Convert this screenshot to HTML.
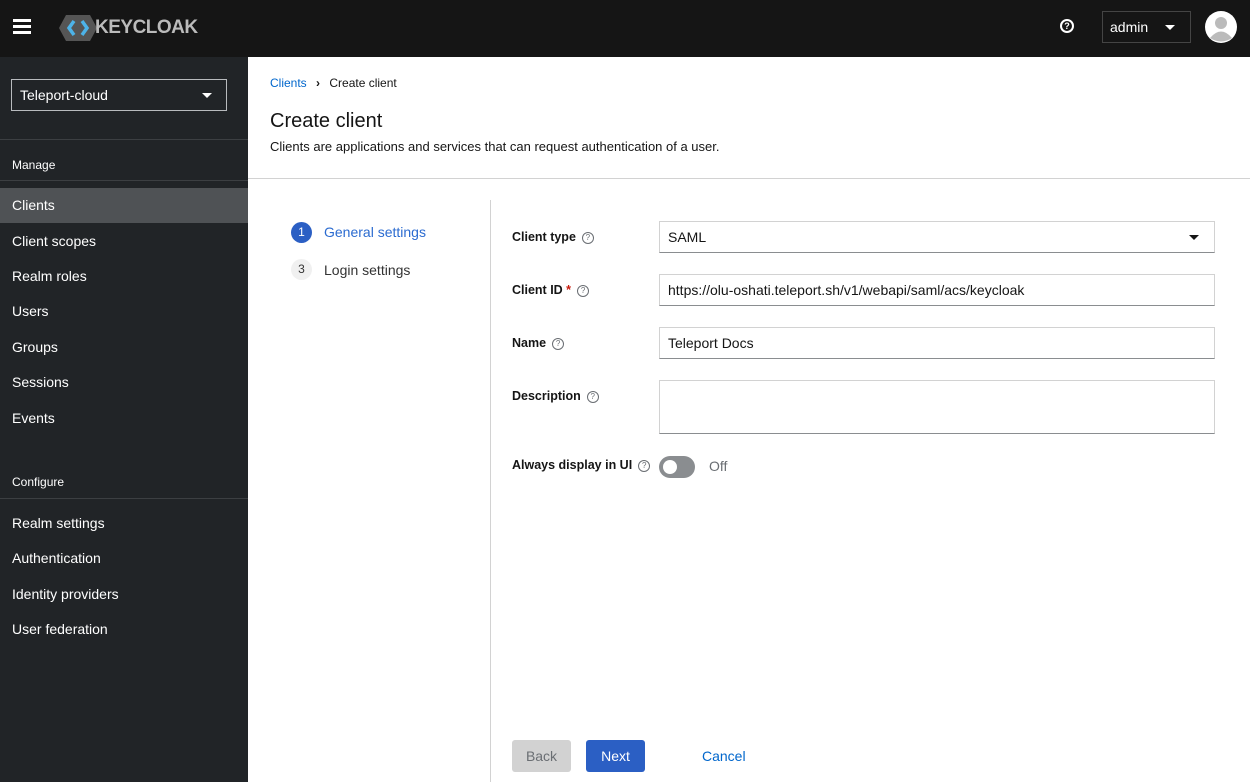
<!DOCTYPE html>
<html><head><meta charset="utf-8"><style>
*{box-sizing:border-box;margin:0;padding:0}
body{width:1250px;height:782px;overflow:hidden;font-family:"Liberation Sans",sans-serif;font-size:14px;color:#151515;background:#fff;position:relative}
.hdr{position:absolute;left:0;top:0;width:1250px;height:57px;background:#151515}
.side{position:absolute;left:0;top:57px;width:248px;height:725px;background:#212427;color:#fff}
.a{position:absolute}
.nav{position:absolute;left:0;width:248px;height:35px;line-height:35px;padding-left:12px;font-size:14px;color:#fff}
.q{display:inline-block;width:12px;height:12px;border:1px solid #6a6e73;border-radius:50%;font-size:8px;line-height:10px;text-align:center;color:#6a6e73;vertical-align:middle;margin-left:6px;font-weight:normal}
.lbl{position:absolute;left:512px;font-size:12.5px;font-weight:bold}
.inp{position:absolute;left:659px;width:556px;height:32px;border:1px solid #d2d2d2;border-bottom-color:#8a8d90;padding-left:8px;line-height:30px;font-size:14px}
</style></head><body>
<div class="hdr">
 <div class="a" style="left:13px;top:19px;width:18px;height:3px;background:#fff;box-shadow:0 6px 0 #fff,0 12px 0 #fff"></div>
 <svg class="a" style="left:59px;top:15px" width="38" height="26" viewBox="0 0 38 26"><polygon points="7,0 31,0 38,13 31,26 7,26 0,13" fill="#555"/><path d="M15 6 L10 13 L15 20" stroke="#4db3e8" stroke-width="3.5" fill="none"/><path d="M23 6 L28 13 L23 20" stroke="#4db3e8" stroke-width="3.5" fill="none"/></svg>
 <div class="a" style="left:95px;top:17px;font-size:19px;font-weight:bold;color:#bbb;letter-spacing:-0.5px">KEYCLOAK</div>
 <div class="a" style="left:1060px;top:19px;width:14px;height:14px;border:2px solid #fff;border-radius:50%;color:#fff;font-size:9px;font-weight:bold;text-align:center;line-height:10px">?</div>
 <div class="a" style="left:1102px;top:11px;width:89px;height:32px;border:1px solid #444;color:#fff;padding-left:7px;line-height:30px;font-size:14px">admin<span style="position:absolute;left:62px;top:13px;border:5px solid transparent;border-top:5px solid #fff"></span></div>
 <svg class="a" style="left:1205px;top:11px" width="32" height="32" viewBox="0 0 32 32"><circle cx="16" cy="16" r="16" fill="#fff"/><circle cx="16" cy="12" r="6" fill="#bbb"/><path d="M5 27 Q16 14 27 27 Q16 34 5 27Z" fill="#bbb"/></svg>
</div>
<div class="side">
 <div class="a" style="left:11px;top:22px;width:216px;height:32px;border:1px solid #b8bbbe;padding-left:8px;line-height:30px;font-size:14px">Teleport-cloud<span style="position:absolute;left:190px;top:13px;border:5px solid transparent;border-top:5px solid #fff"></span></div>
 <div class="a" style="left:0;top:82px;width:248px;height:1px;background:#3c3f42"></div>
 <div class="a" style="left:12px;top:101px;font-size:12px">Manage</div>
 <div class="a" style="left:0;top:123px;width:248px;height:1px;background:#3c3f42"></div>
 <div class="nav" style="top:131px;background:#4f5255">Clients</div>
 <div class="nav" style="top:167px">Client scopes</div>
 <div class="nav" style="top:202px">Realm roles</div>
 <div class="nav" style="top:237px">Users</div>
 <div class="nav" style="top:273px">Groups</div>
 <div class="nav" style="top:308px">Sessions</div>
 <div class="nav" style="top:344px">Events</div>
 <div class="a" style="left:12px;top:418px;font-size:12px">Configure</div>
 <div class="a" style="left:0;top:441px;width:248px;height:1px;background:#3c3f42"></div>
 <div class="nav" style="top:449px">Realm settings</div>
 <div class="nav" style="top:484px">Authentication</div>
 <div class="nav" style="top:520px">Identity providers</div>
 <div class="nav" style="top:555px">User federation</div>
</div>
<div class="a" style="left:270px;top:76px;font-size:12px"><span style="color:#06c">Clients</span> <b style="margin:0 6px">›</b> Create client</div>
<div class="a" style="left:270px;top:110px;font-size:20px">Create client</div>
<div class="a" style="left:270px;top:139px;font-size:13px">Clients are applications and services that can request authentication of a user.</div>
<div class="a" style="left:248px;top:178px;width:1002px;height:1px;background:#d2d2d2"></div>
<div class="a" style="left:490px;top:200px;width:1px;height:582px;background:#d2d2d2"></div>
<div class="a" style="left:291px;top:222px;width:21px;height:21px;border-radius:50%;background:#2b5fc4;color:#fff;font-size:12px;text-align:center;line-height:21px">1</div>
<div class="a" style="left:324px;top:224px;color:#2b6bd0">General settings</div>
<div class="a" style="left:291px;top:259px;width:21px;height:21px;border-radius:50%;background:#f0f0f0;color:#333;font-size:12px;text-align:center;line-height:21px">3</div>
<div class="a" style="left:324px;top:262px;color:#333">Login settings</div>
<div class="lbl" style="top:230px">Client type<span class="q">?</span></div>
<div class="inp" style="top:221px">SAML<span style="position:absolute;left:529px;top:13px;border:5px solid transparent;border-top:5px solid #151515"></span></div>
<div class="lbl" style="top:283px">Client ID <span style="color:#c9190b">*</span><span class="q">?</span></div>
<div class="inp" style="top:274px">https://olu-oshati.teleport.sh/v1/webapi/saml/acs/keycloak</div>
<div class="lbl" style="top:336px">Name<span class="q">?</span></div>
<div class="inp" style="top:327px">Teleport Docs</div>
<div class="lbl" style="top:389px">Description<span class="q">?</span></div>
<div class="inp" style="top:380px;height:54px"></div>
<div class="lbl" style="top:458px">Always display in UI<span class="q">?</span></div>
<div class="a" style="left:659px;top:456px;width:36px;height:22px;border-radius:11px;background:#8a8d90"><div class="a" style="left:4px;top:4px;width:14px;height:14px;border-radius:50%;background:#fff"></div></div>
<div class="a" style="left:709px;top:458px;color:#6a6e73">Off</div>
<div class="a" style="left:512px;top:740px;width:59px;height:32px;background:#d2d2d2;color:#6a6e73;text-align:center;line-height:32px;border-radius:3px">Back</div>
<div class="a" style="left:586px;top:740px;width:59px;height:32px;background:#2b5fc4;color:#fff;text-align:center;line-height:32px;border-radius:3px">Next</div>
<div class="a" style="left:702px;top:748px;color:#06c">Cancel</div>
</body></html>
